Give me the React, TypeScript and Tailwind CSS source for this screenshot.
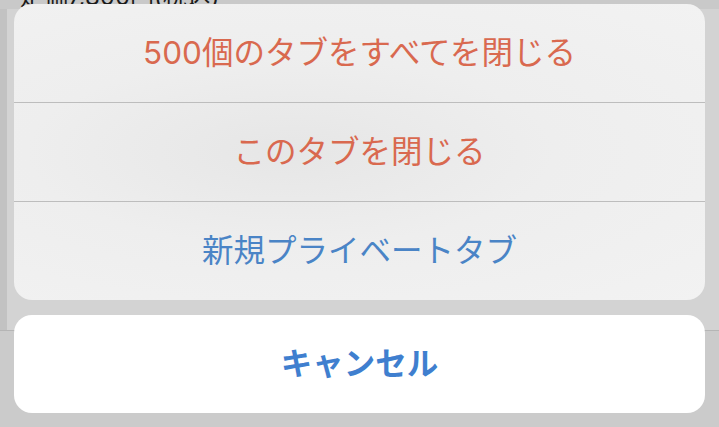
const JP = "font-['Inter','Noto_Sans_CJK_JP',sans-serif]";

type Action = { label: string; tone: "destructive" | "default" };

const actions: Action[] = [
  { label: "500個のタブをすべてを閉じる", tone: "destructive" },
  { label: "このタブを閉じる", tone: "destructive" },
  { label: "新規プライベートタブ", tone: "default" },
];

function ActionRow({ action, last }: { action: Action; last: boolean }) {
  return (
    <button
      className={`flex items-center justify-center w-full ${last ? "h-[98px]" : "h-[99px] border-b border-[#bdbdbd]"} ${JP} text-[31.5px] leading-none ${
        action.tone === "destructive" ? "text-[#d9694f]" : "text-[#4a84c6]"
      }`}
    >
      {action.label}
    </button>
  );
}

export default function App() {
  return (
    <div className="relative w-[719px] h-[427px] overflow-hidden bg-[#c9c9c9]">
      {/* dimmed page behind the sheet */}
      <div className="flex flex-col h-full">
        <div className={`pl-[20px] -mt-[15px] ${JP} text-[24px] text-[#1a1a1a] leading-none whitespace-nowrap`}>
          定価7,800円(税込)
        </div>
        <div className="flex-1 flex">
          <div className="w-[7px] bg-[#c2c2c2]" />
          <div className="flex-1 bg-[#d3d3d3]" />
        </div>
        <div className="h-[97px] border-t border-[#b5b5b5] bg-[#cbcbcb]" />
      </div>

      {/* action sheet */}
      <div className="absolute inset-0 flex flex-col gap-[15px] px-[14px] pt-[4px]">
        <div className="flex flex-col rounded-[18px] overflow-hidden bg-[#efefef] bg-[radial-gradient(ellipse_at_40%_50%,#e6e6e6_0%,#eeeeee_45%,#f2f2f2_100%)]">
          {actions.map((a, i) => (
            <ActionRow key={a.label} action={a} last={i === actions.length - 1} />
          ))}
        </div>
        <button
          className={`flex items-center justify-center h-[98px] rounded-[18px] bg-white ${JP} text-[31.5px] font-bold leading-none text-[#3f7fcf]`}
        >
          キャンセル
        </button>
      </div>
    </div>
  );
}
